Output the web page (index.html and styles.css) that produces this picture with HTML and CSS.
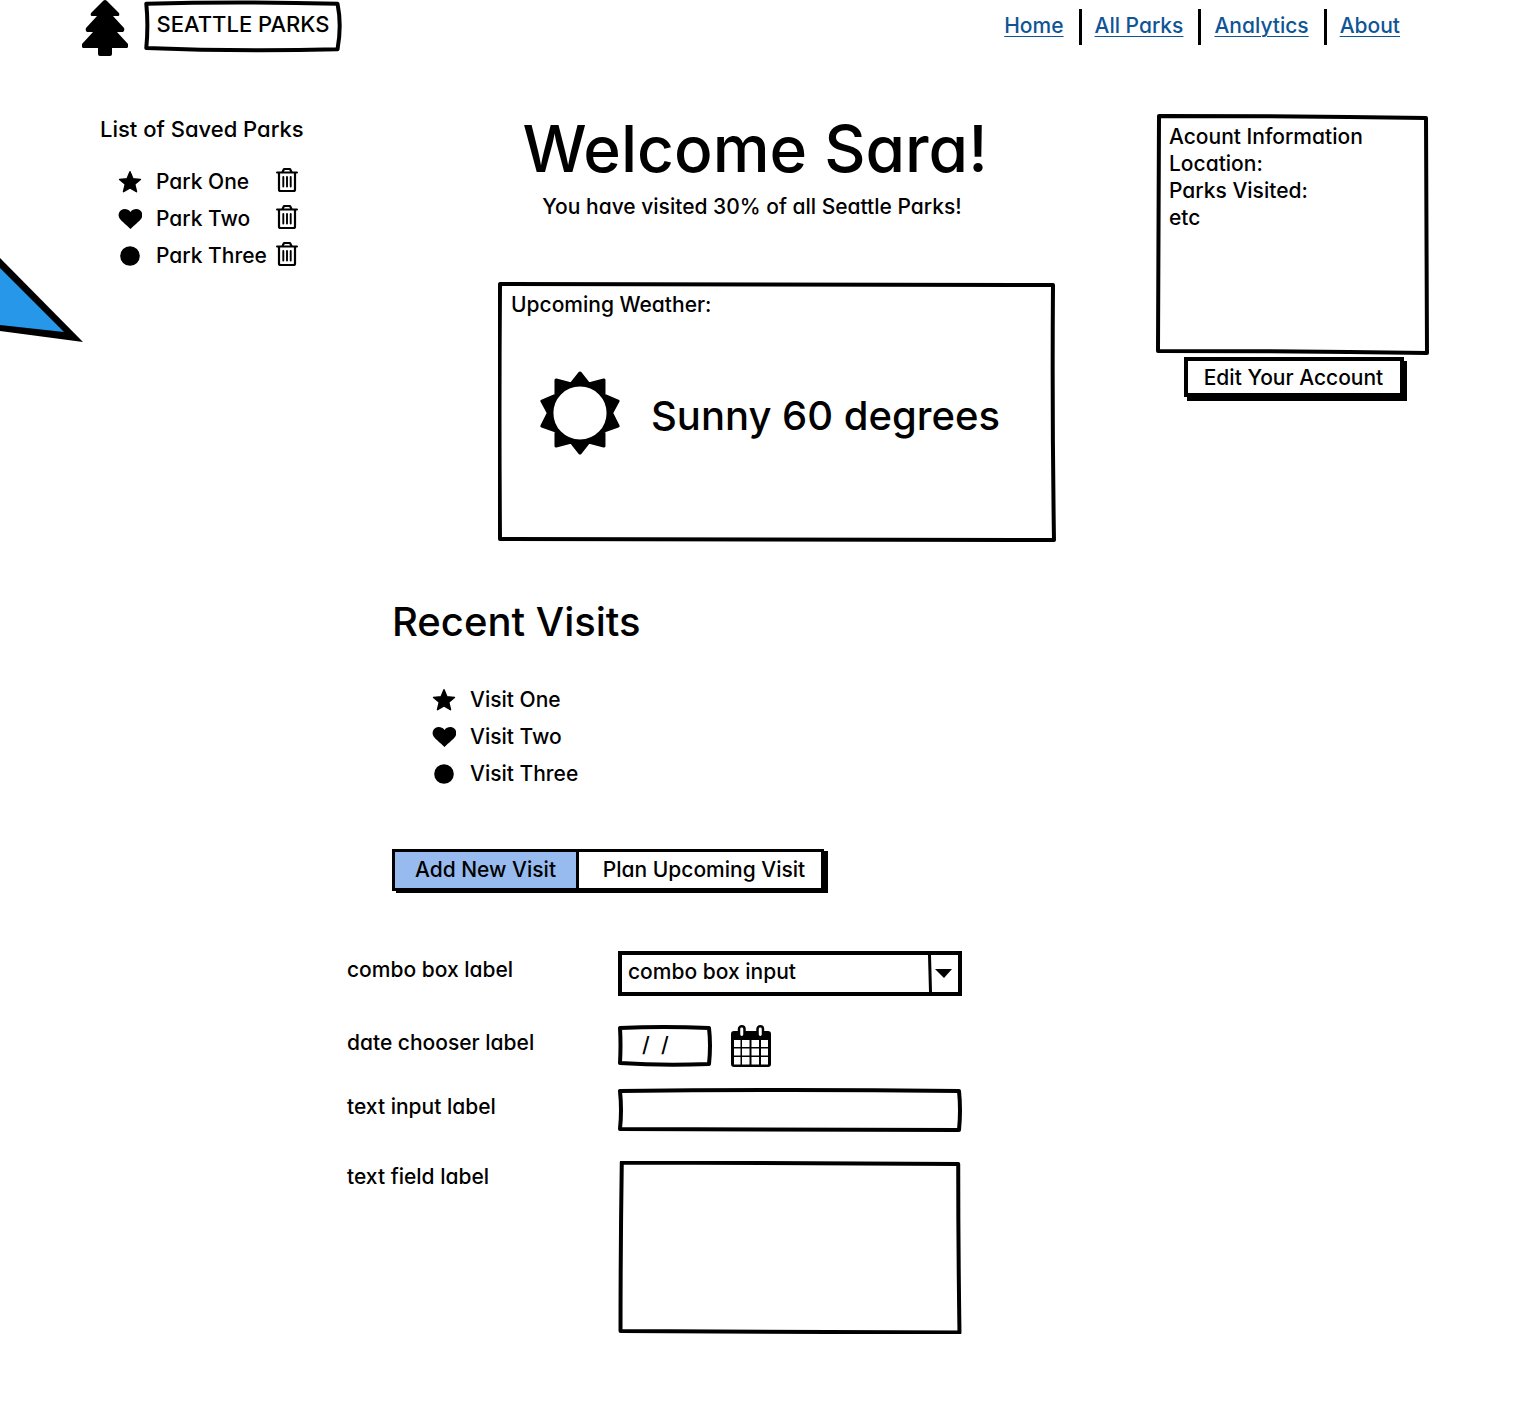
FILE: index.html
```html
<!DOCTYPE html>
<html lang="en">
<head>
<meta charset="utf-8">
<title>Seattle Parks</title>
<link rel="stylesheet" href="styles.css">
</head>
<body>
<svg width="0" height="0" class="sprite" aria-hidden="true">
  <symbol id="star" viewBox="0 0 24 24"><path d="M12 1.800l2.900 6.900 7.500.7-5.700 4.900 1.800 7.400L12 17.800l-6.500 3.900 1.800-7.400L1.600 9.400l7.500-.7z" stroke="#000" stroke-width="1.500" stroke-linejoin="round"/></symbol>
  <symbol id="heart" viewBox="0 0 24 24"><path d="M12.500 22C9 18.500 4 14.500 2 12 0 9.500 0 5.500 3 3.300 6 1.300 10 1.800 12.500 5 15 1.800 19 1.300 22 3.300c3 2.200 2.800 6.200 1 8.700-2 2.500-7 6.500-10.500 10z"/></symbol>
  <symbol id="dot" viewBox="0 0 24 24"><circle cx="12" cy="12" r="9.800"/></symbol>
  <symbol id="trash" viewBox="0 0 22 26"><g fill="none" stroke="#000" stroke-width="2.200" stroke-linecap="round" stroke-linejoin="round"><path d="M1.100 5.500h19.800M6.500 5L8 2h6l1.500 3M3 6v16.500Q3 24 4.500 24h13q1.500 0 1.500-1.500V6"/><path d="M7.300 10v9.500M11 10v9.500M14.700 10v9.500" stroke-width="1.900"/></g></symbol>
</svg>

<svg class="pointer" viewBox="0 0 84 86" aria-hidden="true">
  <path d="M0 1L83 85 0 74z"/>
  <path d="M0 11L64 75 0 68z" fill="#2797ea"/>
</svg>

<header class="top">
  <div class="brand">
    <svg class="tree" viewBox="0 0 46 56" aria-hidden="true"><path d="M23 0q1 0 2 1l12 12q1 3-1 3h-5l11 12q1 3-1 4h-6l11 12q1 3-1 4H30v6q0 2-2 2H18q-2 0-2-2v-6H1q-2-1-1-4l11-12H5q-2-1-1-4l11-12h-5q-2 0-1-3L21 1q1-1 2-1z"/></svg>
    <div class="brand-name sketch-small">SEATTLE PARKS</div>
  </div>
  <nav class="links" aria-label="Main">
    <a href="#home">Home</a>
    <a href="#parks">All Parks</a>
    <a href="#analytics">Analytics</a>
    <a href="#about">About</a>
  </nav>
</header>

<main>
  <div class="overview">
    <section class="saved">
      <h2>List of Saved Parks</h2>
      <ul class="marks">
        <li><svg><use href="#star"/></svg><span>Park One</span><button class="icon-button" aria-label="Delete Park One"><svg class="bin"><use href="#trash"/></svg></button></li>
        <li><svg><use href="#heart"/></svg><span>Park Two</span><button class="icon-button" aria-label="Delete Park Two"><svg class="bin"><use href="#trash"/></svg></button></li>
        <li><svg><use href="#dot"/></svg><span>Park Three</span><button class="icon-button" aria-label="Delete Park Three"><svg class="bin"><use href="#trash"/></svg></button></li>
      </ul>
    </section>

    <section class="welcome">
      <h1>Welcome Sara!</h1>
      <p class="progress">You have visited 30% of all Seattle Parks!</p>
      <div class="weather sketch-box">
        <h2>Upcoming Weather:</h2>
        <div class="forecast">
          <svg class="sun" viewBox="0 0 82 84" aria-hidden="true"><path fill-rule="evenodd" stroke="#000" stroke-width="3" stroke-linejoin="round" d="M41 2l8 11 14-4v15l13 6-6 12 6 13-13 5v15l-14-4-8 11-8-11-14 4V60L6 55l6-13-6-12 13-6V9l14 4zM41 14c-15 0-26 13-26 28s11 28 26 28 26-13 26-28-11-28-26-28z" transform="translate(-3.500 0) scale(1.085 1)"/></svg>
          <p>Sunny 60 degrees</p>
        </div>
      </div>
    </section>

    <aside class="account">
      <div class="account-box sketch-panel">
        <h2>Acount Information</h2>
        <p>Location:</p>
        <p>Parks Visited:</p>
        <p>etc</p>
      </div>
      <button class="edit">Edit Your Account</button>
    </aside>
  </div>

  <section class="visits">
    <div class="recent">
      <h2>Recent Visits</h2>
      <ul class="marks">
        <li><svg><use href="#star"/></svg><span>Visit One</span></li>
        <li><svg><use href="#heart"/></svg><span>Visit Two</span></li>
        <li><svg><use href="#dot"/></svg><span>Visit Three</span></li>
      </ul>
      <div class="tabs">
        <button class="tab tab-on">Add New Visit</button>
        <button class="tab">Plan Upcoming Visit</button>
      </div>
    </div>

    <form class="visit-form">
      <div class="row">
        <label for="combo">combo box label</label>
        <select id="combo" class="combo"><option>combo box input</option></select>
      </div>
      <div class="pair">
        <div class="row">
          <label for="date">date chooser label</label>
          <div class="date">
            <input id="date" class="date-input sketch-small" type="text" value="/  /">
            <button type="button" class="icon-button" aria-label="Choose a date">
              <svg class="calendar" viewBox="0 0 40 42" aria-hidden="true">
                <rect x="0" y="6" width="40" height="36" rx="3"/>
                <path fill="#fff" d="M3 15h6.500v7H3zM11 15h7.500v7H11zM20.500 15h7.500v7h-7.500zM30 15h7v7h-7zM3 23.500h6.500v7H3zM11 23.500h7.500v7H11zM20.500 23.500h7.500v7h-7.500zM30 23.500h7v7h-7zM3 32h6.500v7.500H3zM11 32h7.500v7.500H11zM20.500 32h7.500v7.500h-7.500zM30 32h7v7.500h-7z"/>
                <g fill="#fff" stroke="#000" stroke-width="2.500"><rect x="8" y="1.300" width="5.500" height="11" rx="2.700"/><rect x="26.500" y="1.300" width="5.500" height="11" rx="2.700"/></g>
              </svg>
            </button>
          </div>
        </div>
        <div class="row">
          <label for="text">text input label</label>
          <input id="text" class="text-input sketch-strip" type="text">
        </div>
      </div>
      <div class="row row-top">
        <label for="field">text field label</label>
        <textarea id="field" class="text-area sketch-panel"></textarea>
      </div>
    </form>
  </section>
</main>
</body>
</html>
```
FILE: styles.css
```css
:root {
  --ink: #000;
  --link: #0f5596;
}

* { box-sizing: border-box; }

body {
  margin: 0;
  background: #fff;
  color: var(--ink);
  font: 500 21px/27px Inter, "Liberation Sans", sans-serif;
  font-feature-settings: "cv11", "ss03";
}

h1, h2, p, ul { margin: 0; padding: 0; font-weight: 500; }
h2 { font-size: 21px; }
ul { list-style: none; }

button, input, select, textarea {
  font: inherit;
  font-feature-settings: inherit;
  color: inherit;
  margin: 0;
  border: 0;
  border-radius: 0;
  background: none;
}

svg { display: block; }
.sprite { position: absolute; }

/* Hand-drawn outlines, stretched to the box they sit on */
.sketch-box {
  background: url("data:image/svg+xml,%3Csvg xmlns='http://www.w3.org/2000/svg' viewBox='0 0 558 260' preserveAspectRatio='none'%3E%3Cpath d='M2 2Q280 2 555 3Q554 130 556 258Q280 257 2 257Q1 130 2 2Z' fill='none' stroke='black' stroke-width='4' stroke-linejoin='round' vector-effect='non-scaling-stroke'/%3E%3C/svg%3E") 0 0 / 100% 100% no-repeat;
}
.sketch-panel {
  background: url("data:image/svg+xml,%3Csvg xmlns='http://www.w3.org/2000/svg' viewBox='0 0 273 240' preserveAspectRatio='none'%3E%3Cpath d='M3 2Q140 2 270 4Q270 120 271 238Q140 236 2 236Q2 120 3 2Z' fill='none' stroke='black' stroke-width='4' stroke-linejoin='round' vector-effect='non-scaling-stroke'/%3E%3C/svg%3E") 0 0 / 100% 100% no-repeat;
}
.sketch-strip {
  background: url("data:image/svg+xml,%3Csvg xmlns='http://www.w3.org/2000/svg' viewBox='0 0 344 44' preserveAspectRatio='none'%3E%3Cpath d='M2 3Q170 1 341 3Q343 22 341 42Q170 42 2 41Q4 22 2 3Z' fill='none' stroke='black' stroke-width='4' stroke-linejoin='round' vector-effect='non-scaling-stroke'/%3E%3C/svg%3E") 0 0 / 100% 100% no-repeat;
}
.sketch-small {
  background: url("data:image/svg+xml,%3Csvg xmlns='http://www.w3.org/2000/svg' viewBox='0 0 94 42' preserveAspectRatio='none'%3E%3Cpath d='M2 3Q45 1 91 3Q93 20 91 39Q45 41 2 38Q3 20 2 3Z' fill='none' stroke='black' stroke-width='4' stroke-linejoin='round' vector-effect='non-scaling-stroke'/%3E%3C/svg%3E") 0 0 / 100% 100% no-repeat;
}

.pointer {
  position: absolute;
  left: 0;
  top: 257px;
  width: 84px;
}

.top {
  display: flex;
  justify-content: space-between;
  align-items: flex-start;
  padding: 0 120px 0 82px;
}
.brand { display: flex; gap: 14px; }
.tree { width: 46px; height: 56px; }
.brand-name {
  width: 202px;
  height: 53px;
  padding-top: 11px;
  font-size: 22px;
  text-align: center;
}

.links { display: flex; padding-top: 9px; }
.links a {
  color: var(--link);
  line-height: 33px;
  height: 36px;
  text-decoration-thickness: 1px;
  text-underline-offset: 3px;
}
.links a + a {
  margin-left: 15px;
  padding-left: 16px;
  background: linear-gradient(var(--ink), var(--ink)) 0 0 / 3px 100% no-repeat;
}

.overview {
  display: grid;
  grid-template-columns: 298fr 558fr 273fr;
  column-gap: 100px;
  padding: 58px 91px 0 100px;
}

.saved h2 { font-size: 22px; line-height: 30px; }
.saved .marks { width: 200px; padding: 19px 0 0 18px; }

.marks li {
  display: flex;
  align-items: center;
  height: 37px;
}
.marks li > svg { width: 24px; height: 24px; margin-right: 14px; }
.icon-button { padding: 0; cursor: pointer; }
.marks .icon-button { margin: 0 2px 4px auto; }
.bin { width: 22px; height: 26px; }

.welcome h1 {
  font-size: 64px;
  line-height: 70px;
  padding-right: 44px;
  text-align: center;
}
.progress { padding: 9px 50px 0 0; text-align: center; }
.weather {
  min-height: 260px;
  margin-top: 62px;
  padding: 9px 13px;
}
.forecast {
  display: flex;
  align-items: center;
  gap: 30px;
  padding: 53px 0 0 28px;
}
.sun { width: 82px; height: 84px; }
.forecast p { padding-top: 5px; font-size: 40px; line-height: 48px; }

.account {
  display: flex;
  flex-direction: column;
  align-items: center;
}
.account-box {
  align-self: stretch;
  min-height: 241px;
  padding: 9px 13px;
}
.edit {
  width: 220px;
  height: 40px;
  margin: 2px 0 0 2px;
  border: 4px solid var(--ink);
  padding: 0;
  box-shadow: 3px 4px var(--ink);
  cursor: pointer;
}

.visits { padding: 56px 0 72px 347px; }
.recent { padding-left: 45px; }
.recent h2 { font-size: 40px; line-height: 48px; }
.recent .marks { padding: 35px 0 0 40px; }

.tabs {
  display: inline-flex;
  margin-top: 57px;
  border: 3px solid var(--ink);
  box-shadow: 4px 2px var(--ink);
}
.tab {
  width: 242px;
  height: 36px;
  padding: 0 0 2px 8px;
  cursor: pointer;
}
.tab-on {
  width: 184px;
  padding: 0 0 2px;
  border-right: 3px solid var(--ink);
  background: #97bbef;
}

.visit-form {
  display: flex;
  flex-direction: column;
  gap: 29px;
  margin-top: 60px;
}
.pair { display: flex; flex-direction: column; gap: 21px; }
.row {
  display: grid;
  grid-template-columns: 271px 344px;
  align-items: center;
}
.row label { padding-bottom: 8px; }
.row-top { align-items: start; }
.row-top label { padding-top: 2px; }

.combo {
  width: 100%;
  height: 45px;
  padding: 0 40px 5px 6px;
  border: 4px solid var(--ink);
  appearance: none;
  background:
    url("data:image/svg+xml,%3Csvg xmlns='http://www.w3.org/2000/svg' viewBox='0 0 30 37'%3E%3Cpath d='M0 0L3 0L4 37L1 37ZM7 14h17l-8 9z'/%3E%3C/svg%3E") right center / 30px 37px no-repeat;
}
.date { display: flex; gap: 19px; }
.date-input { width: 94px; height: 42px; padding: 0 24px 4px; white-space: pre; }
.calendar { width: 40px; height: 42px; }
.text-input { width: 100%; height: 44px; padding: 0 12px; }
.text-area {
  display: block;
  width: 100%;
  height: 173px;
  padding: 10px 12px;
  resize: none;
}
```
